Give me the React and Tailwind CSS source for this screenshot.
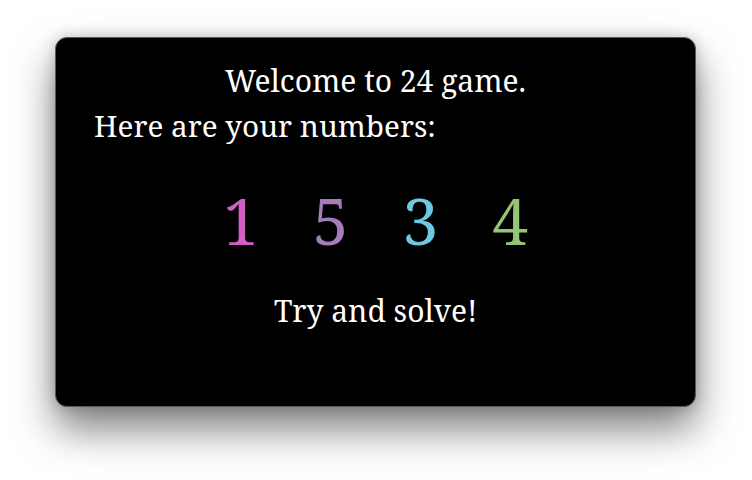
export default function App() {
  return (
    <div className="w-[752px] h-[480px] bg-white pt-[37px] pl-[55px]" style={{ fontFamily: '"Noto Serif", "DejaVu Serif", serif' }}>
      <div className="w-[641px] h-[370px] bg-black rounded-[12px] border border-[#5a5a5a] shadow-[0_22px_40px_rgba(0,0,0,0.5),0_0_14px_rgba(0,0,0,0.2)] text-white flex flex-col">
        <div className="text-center text-[30px] leading-[40px] mt-[23px]">Welcome to 24 game.</div>
        <div className="text-[29.7px] leading-[40px] mt-[5px] pl-[38px]">Here are your numbers:</div>
        <div className="flex justify-center gap-[54px] text-[64px] leading-[80px] mt-[35px]">
          <span className="text-[#d35fc5]">1</span>
          <span className="text-[#a47cba]">5</span>
          <span className="text-[#6cc9e2]">3</span>
          <span className="text-[#94c474]">4</span>
        </div>
        <div className="text-center text-[30px] leading-[40px] mt-[30px]">Try and solve!</div>
      </div>
    </div>
  );
}
